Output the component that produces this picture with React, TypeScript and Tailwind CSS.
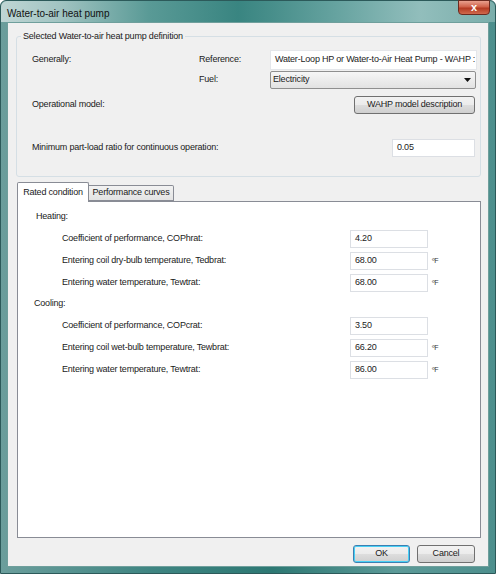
import React from 'react';

const font = "font-['Liberation_Sans',Arial,sans-serif]";
const btnBg = 'bg-[linear-gradient(180deg,#f2f2f2_0%,#ebebeb_50%,#dddddd_51%,#cfcfcf_100%)]';

const TextBox: React.FC<{ value: string; className?: string }> = ({ value, className = '' }) => (
  <div className={`h-[18px] bg-white border border-[#dcdfe4] px-[4px] flex items-center whitespace-nowrap overflow-hidden text-[#222] ${className}`}>
    {value}
  </div>
);

const Row: React.FC<{ label: string; value: string; unit?: boolean }> = ({ label, value, unit }) => (
  <div className="flex items-center h-[22px]">
    <span className="ml-[44px] w-[288px] whitespace-nowrap">{label}</span>
    <TextBox value={value} className="w-[78px]" />
    {unit && <span className="ml-[4px] text-[7px] text-[#333]">ºF</span>}
  </div>
);

const App: React.FC = () => {
  return (
    <div className={`w-[496px] h-[574px] ${font} text-[9px] tracking-[-0.2px] text-[#1a1a1a] rounded-t-[6px] bg-[linear-gradient(90deg,#6b9e9c_0%,#3f8582_30%,#2d7873_55%,#5c9a98_80%,#4d8f8d_100%)] flex flex-col px-[6px] pb-[6px] border border-[#2c5a5a]`}>
      {/* title bar */}
      <div className="h-[21px] flex items-start relative">
        <div className="absolute inset-0 -mx-[6px] rounded-t-[6px] bg-[linear-gradient(90deg,#c9dcdb_0%,#a9c9c7_12%,#5c9c98_30%,#3a8682_48%,#6aa6a3_68%,#98c2c0_85%,#7fb1ae_100%)] opacity-90" />
        <span className="relative mt-[5px] ml-[0px] text-[10px] tracking-normal text-[#111]">Water-to-air heat pump</span>
        <div className="absolute right-[-1px] top-[-1px] w-[32px] h-[15px] rounded-b-[4px] border border-[#6b2a20] bg-[linear-gradient(180deg,#e9a08e_0%,#d0624a_45%,#b43a22_55%,#d06a4e_100%)] flex items-center justify-center">
          <span className="text-white text-[11px] font-bold leading-none">x</span>
        </div>
      </div>

      {/* client area */}
      <div className="flex-1 bg-[#f0f0f0] border border-[#6f9f9c] flex flex-col pl-[8px] pr-[7px] pt-[6px]">
        {/* group box */}
        <div className="relative mt-[7px] h-[141px] border border-[#d5dfe5] rounded-[3px] pt-[13px]">
          <span className="absolute -top-[7px] left-[4px] px-[2px] bg-[#f0f0f0] whitespace-nowrap">Selected Water-to-air heat pump definition</span>

          <div className="flex items-center h-[20px]">
            <span className="ml-[15px] w-[167px]">Generally:</span>
            <span className="w-[71px]">Reference:</span>
            <TextBox value="Water-Loop HP or Water-to-Air Heat Pump - WAHP :" className="w-[207px] h-[20px] border-[#e4e6ea]" />
          </div>
          <div className="flex items-center h-[20px]">
            <span className="ml-[182px] w-[71px]">Fuel:</span>
            <div className="w-[206px] h-[18px] border border-[#8f8f8f] rounded-[2px] bg-[linear-gradient(180deg,#f6f6f6,#e2e2e2)] flex items-center px-[2px] justify-between">
              <span>Electricity</span>
              <svg width="7" height="4" viewBox="0 0 7 4" className="mr-[2px]"><path d="M0 0h7L3.5 4z" fill="#111" /></svg>
            </div>
          </div>
          <div className="flex items-center h-[18px] mt-[6px]">
            <span className="ml-[15px] flex-1">Operational model:</span>
            <div className={`w-[121px] h-[18px] mr-[5px] border border-[#707070] rounded-[3px] ${btnBg} flex items-center justify-center whitespace-nowrap`}>
              WAHP model description
            </div>
          </div>
          <div className="flex items-center h-[18px] mt-[25px]">
            <span className="ml-[15px] flex-1 whitespace-nowrap">Minimum part-load ratio for continuous operation:</span>
            <TextBox value="0.05" className="w-[83px] mr-[5px]" />
          </div>
        </div>

        {/* tabs */}
        <div className="mt-[5px] flex items-end h-[19px] ml-[1px] relative z-10">
          <div className="h-[20px] -mb-[1px] w-[72px] bg-white border border-[#898c95] border-b-0 rounded-t-[2px] flex items-center justify-center whitespace-nowrap">
            Rated condition
          </div>
          <div className="h-[16px] w-[85px] border border-[#898c95] border-l-0 rounded-tr-[2px] bg-[linear-gradient(180deg,#f2f2f2,#e3e3e3)] flex items-center justify-center whitespace-nowrap">
            Performance curves
          </div>
        </div>
        <div className="h-[337px] ml-[1px] bg-white border border-[#898c95] pt-[7px]">
          <div className="h-[16px] ml-[18px] flex items-center">Heating:</div>
          <div className="mt-[3px]">
            <Row label="Coefficient of performance, COPhrat:" value="4.20" />
            <Row label="Entering coil dry-bulb temperature, Tedbrat:" value="68.00" unit />
            <Row label="Entering water temperature, Tewtrat:" value="68.00" unit />
          </div>
          <div className="h-[16px] ml-[16px] mt-[2px] flex items-center">Cooling:</div>
          <div className="mt-[3px]">
            <Row label="Coefficient of performance, COPcrat:" value="3.50" />
            <Row label="Entering coil wet-bulb temperature, Tewbrat:" value="66.20" unit />
            <Row label="Entering water temperature, Tewtrat:" value="86.00" unit />
          </div>
        </div>

        {/* buttons */}
        <div className="flex justify-end gap-[7px] mt-[7px] mr-[6px]">
          <div className={`w-[57px] h-[18px] rounded-[3px] border border-[#3c7fb1] shadow-[inset_0_0_0_1px_#48d0f5] ${btnBg} flex items-center justify-center`}>OK</div>
          <div className={`w-[58px] h-[18px] rounded-[3px] border border-[#707070] ${btnBg} flex items-center justify-center`}>Cancel</div>
        </div>
      </div>
    </div>
  );
};

export default App;
